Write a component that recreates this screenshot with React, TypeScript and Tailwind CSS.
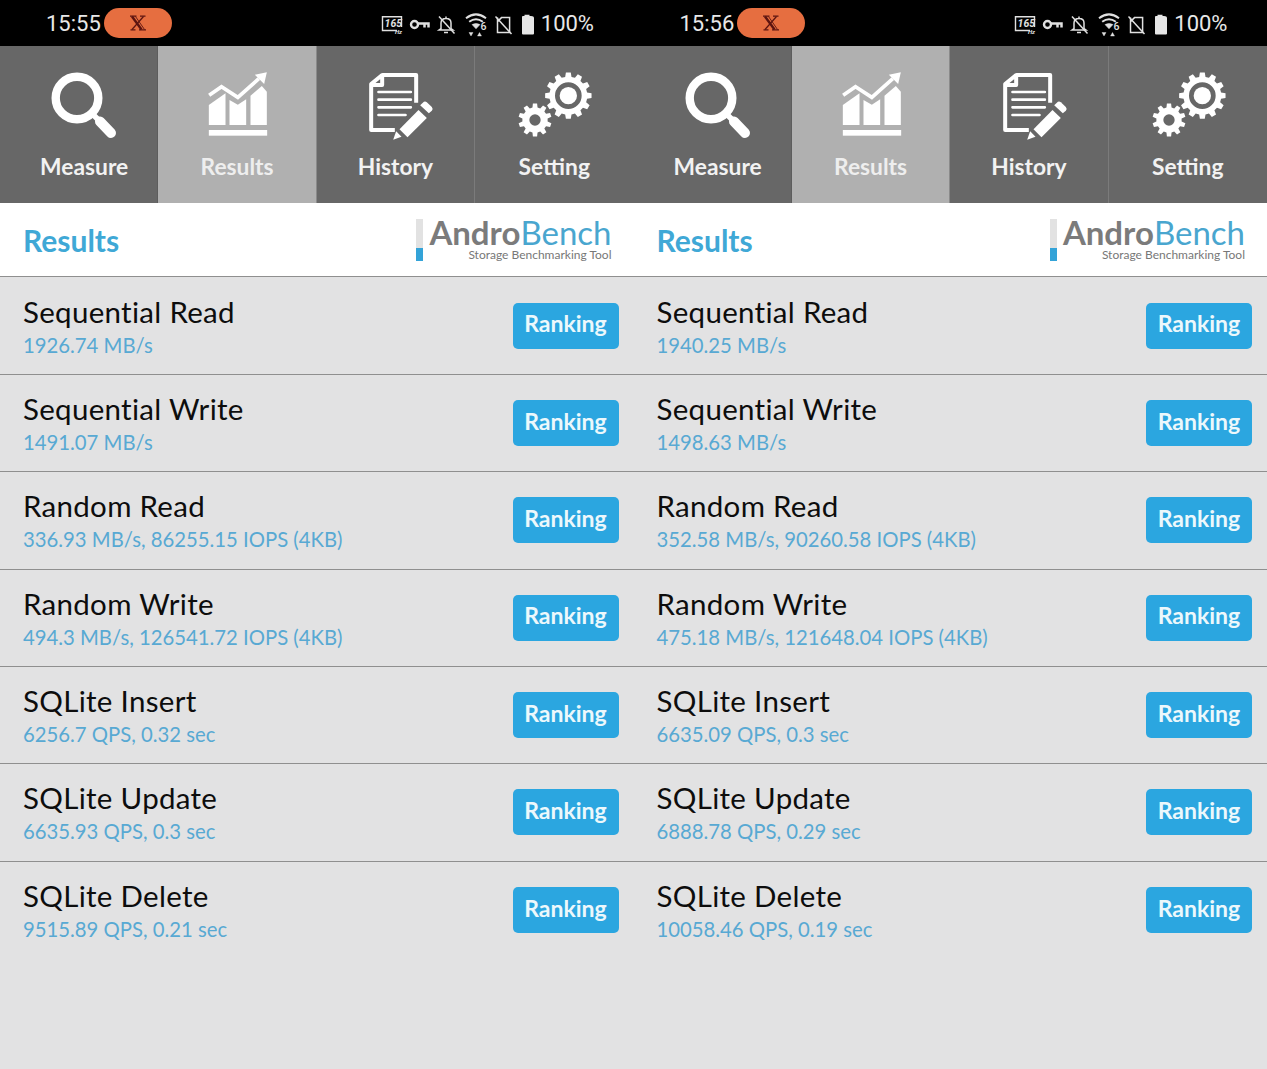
import React from "react";

const gearPath = (cx: number, cy: number, ro: number, ri: number, n: number) => {
  const pts: string[] = [];
  const step = (Math.PI * 2) / n;
  for (let i = 0; i < n; i++) {
    const a = i * step - Math.PI / 2;
    const p = (r: number, t: number) =>
      `${(cx + r * Math.cos(a + t * step)).toFixed(1)} ${(cy + r * Math.sin(a + t * step)).toFixed(1)}`;
    pts.push(p(ri, -0.32), p(ro, -0.2), p(ro, 0.2), p(ri, 0.32));
  }
  return "M" + pts.join("L") + "Z";
};

const circlePath = (cx: number, cy: number, r: number) =>
  `M${cx - r} ${cy}a${r} ${r} 0 1 0 ${2 * r} 0a${r} ${r} 0 1 0 ${-2 * r} 0Z`;

const MeasureIcon = () => (
  <svg width="90" height="90" viewBox="39.5 60 90 90" fill="none" stroke="white" strokeLinecap="round">
    <circle cx="77.5" cy="98" r="21.3" strokeWidth="8.4" />
    <path d="M93 114 L99 120" strokeWidth="5.5" />
    <path d="M100.5 121.5 L111.5 133" strokeWidth="10" />
  </svg>
);

const ResultsIcon = () => (
  <svg width="90" height="90" viewBox="7.5 0 270 270" fill="white">
    <path d="M58 135 L108 100 V195 H58Z" />
    <path d="M120 120 L145 134 L170 118 V195 H120Z" />
    <path d="M183 107 L217 78 L232 95 V195 H183Z" />
    <rect x="58" y="210" width="175" height="17" />
    <path d="M59 106 L96 80 L145 112 L208 56" fill="none" stroke="white" strokeWidth="11" />
    <path d="M232 37 L196 44 L224 72Z" />
  </svg>
);

const HistoryIcon = () => (
  <svg width="90" height="90" viewBox="1.5 0 270 270" fill="none">
    <path
      d="M98 45 H200 V128 M136 210 H65 V72 L98 45 V75 H65"
      stroke="white"
      strokeWidth="12"
      strokeLinejoin="round"
    />
    <path d="M87 96 H184 M87 119 H184 M87 142 H184 M87 165 H168" stroke="white" strokeWidth="8" strokeLinecap="round" />
    <path d="M150 208 L207 150 L232 174 L174 232Z" fill="white" stroke="#676767" strokeWidth="7" paintOrder="stroke" />
    <path d="M220 128 Q226 122 232 127 L247 141 Q252 147 247 152 L238 160 L212 136Z" fill="white" />
    <path d="M131 239 L140 214 L156 230Z" fill="white" />
  </svg>
);

const SettingIcon = () => (
  <svg width="90" height="90" viewBox="-3 0 270 270">
    <path
      fillRule="evenodd"
      fill="white"
      d={gearPath(175, 107, 70, 57, 12) + circlePath(175, 107, 40)}
    />
    <circle cx="175" cy="107" r="26" fill="white" />
    <path
      fillRule="evenodd"
      fill="white"
      d={gearPath(75, 180, 50, 38, 10) + circlePath(75, 180, 17)}
    />
  </svg>
);

const XLogo = () => (
  <svg width="18" height="16" viewBox="0 0 18 16" fill="none" stroke="#5c1410">
    <path d="M1 1.2 H7.5 M11 1.2 H16.5 M1.5 14.8 H6.5 M10 14.8 H17" strokeWidth="1.3" />
    <path d="M3 1.5 L12.5 14.5" strokeWidth="2.4" />
    <path d="M6.5 1.5 L15.5 14.5" strokeWidth="0.9" />
    <path d="M14.5 1.5 L3 14.5" strokeWidth="1.2" />
  </svg>
);

const StatusIcons = () => (
  <svg className="mt-[5px]" width="156" height="26" viewBox="0 0 156 26" fill="none" stroke="#e0e0e0">
    {/* 165 Hz */}
    <path d="M16 17.5 H1.5 V3.7 H20.5 V14" strokeWidth="1.4" />
    <text x="3.6" y="14" fill="#e0e0e0" stroke="none" fontSize="10.5" fontStyle="italic" fontWeight="700" fontFamily="Roboto, sans-serif">
      165
    </text>
    <text x="14" y="21" fill="#e0e0e0" stroke="none" fontSize="6" fontStyle="italic" fontWeight="700" fontFamily="Roboto, sans-serif">
      Hz
    </text>
    {/* key */}
    <circle cx="33.5" cy="11.5" r="3.5" strokeWidth="2.4" />
    <path d="M37 10.4 H47.5 V14.5 M43.5 11 V14.5" strokeWidth="2.5" />
    {/* bell off */}
    <path d="M65 3.5 V5 M60 15.5 V10 Q60 5.5 65 5.5 Q70 5.5 70 10 V15.5 L72 17 H58 L60 15.5 Z M63 19.5 H67" strokeWidth="1.5" />
    <path d="M58 3.5 L73.5 20.5" strokeWidth="1.5" />
    {/* wifi 6 */}
    <path d="M85 5.2 Q95 -2.4 105 5.2 M88.2 8.8 Q95 3.6 101.8 8.8" strokeWidth="2" />
    <path d="M91 11.6 Q95 9.2 99 11.6 L95 15.8Z" fill="#e0e0e0" strokeWidth="0.5" />
    <text x="99.5" y="16.6" fill="#e0e0e0" stroke="none" fontSize="10.5" fontWeight="500" fontFamily="Roboto, sans-serif">
      6
    </text>
    <path d="M88 19.5 H92 L90 23Z M96.5 23 H100.5 L98.5 19.5Z" fill="#e0e0e0" strokeWidth="0.4" />
    {/* no sim */}
    <path d="M116.5 4.6 V19.6 H128.6 V4.6 H120.5 L116.5 8.6" strokeWidth="1.5" />
    <path d="M114.5 3.5 L130.5 21" strokeWidth="1.5" />
    {/* battery */}
    <path
      d="M141 3.8 Q141 3 142 3 H143.5 V1.8 H148.5 V3 H150 Q153 3 153 5 V20.5 Q153 21.5 152 21.5 H142 Q141 21.5 141 20.5Z"
      fill="#e6e6e6"
      stroke="none"
    />
  </svg>
);

const tabs = [
  { label: "Measure", icon: <MeasureIcon />, cls: "bg-[#676767] text-[#f2f2f2] pl-[11px] border-r border-[#5d5d5d]" },
  { label: "Results", icon: <ResultsIcon />, cls: "bg-[#b0b0b0] text-[#eeeeee] border-r border-[#8a8a8a]" },
  { label: "History", icon: <HistoryIcon />, cls: "bg-[#676767] text-[#f2f2f2] border-r border-[#7b7b7b]" },
  { label: "Setting", icon: <SettingIcon />, cls: "bg-[#676767] text-[#f2f2f2]" },
];

const Row = ({ title, value }: { title: string; value: string }) => (
  <div className="flex h-[97.35px] items-center justify-between border-b border-[#8f8f8f] pl-[23px] pr-[15px] last:border-b-0">
    <div className="flex flex-col">
      <div className="text-[29.5px] leading-[36px] tracking-[0.3px] text-[#0d0d0d]">{title}</div>
      <div className="mt-[2px] text-[20.3px] leading-[26px] text-[#58a9d3]">{value}</div>
    </div>
    <button className="flex h-[46px] w-[106px] items-center justify-center rounded-[5px] bg-[#2ba6e0] pb-[4px] text-[23px] font-bold text-[#ecf8fc]">
      Ranking
    </button>
  </div>
);

const Screen = ({ time, rows }: { time: string; rows: [string, string][] }) => (
  <div className="flex flex-col">
    <div className="flex h-[46px] items-center bg-black pl-[46px] pr-[39.5px] font-['Roboto',sans-serif]">
      <span className="mt-[2px] text-[22px] leading-none text-[#e8e8e8]">{time}</span>
      <span className="ml-[3px] flex h-[30px] w-[68px] items-center justify-center rounded-full bg-[#e66e40]">
        <XLogo />
      </span>
      <div className="ml-auto flex items-center gap-[4px]">
        <StatusIcons />
        <span className="mt-[2px] text-[22px] leading-none text-[#e8e8e8]">100%</span>
      </div>
    </div>
    <div className="grid h-[158px] grid-cols-4 border-b border-white">
      {tabs.map((t) => (
        <div key={t.label} className={`flex flex-col items-center pt-[14px] ${t.cls}`}>
          {t.icon}
          <div className="mt-[1px] text-[22.8px] font-bold leading-[30px]">{t.label}</div>
        </div>
      ))}
    </div>
    <div className="flex h-[73px] items-center justify-between border-b border-[#8f8f8f] bg-white pl-[23px] pr-[22px]">
      <div className="pb-[1px] text-[30px] font-bold leading-none text-[#3fa8d6]">Results</div>
      <div className="flex h-[42px] items-stretch gap-[6px]">
        <div className="flex w-[7px] flex-col">
          <div className="flex-1 bg-[#e2e2e2]" />
          <div className="h-[13px] bg-[#33a3d8]" />
        </div>
        <div className="flex flex-col items-end">
          <div className="-mt-[3px] flex text-[33px] leading-[32px]">
            <span className="font-bold text-[#7b7b7b]">Andro</span>
            <span className="text-[#49a6cf]">Bench</span>
          </div>
          <div className="text-[12px] leading-[14px] text-[#777777]">Storage Benchmarking Tool</div>
        </div>
      </div>
    </div>
    <div className="flex flex-col pt-[0.5px]">
      {rows.map(([t, v]) => (
        <Row key={t} title={t} value={v} />
      ))}
    </div>
  </div>
);

const left: [string, string][] = [
  ["Sequential Read", "1926.74 MB/s"],
  ["Sequential Write", "1491.07 MB/s"],
  ["Random Read", "336.93 MB/s, 86255.15 IOPS (4KB)"],
  ["Random Write", "494.3 MB/s, 126541.72 IOPS (4KB)"],
  ["SQLite Insert", "6256.7 QPS, 0.32 sec"],
  ["SQLite Update", "6635.93 QPS, 0.3 sec"],
  ["SQLite Delete", "9515.89 QPS, 0.21 sec"],
];

const right: [string, string][] = [
  ["Sequential Read", "1940.25 MB/s"],
  ["Sequential Write", "1498.63 MB/s"],
  ["Random Read", "352.58 MB/s, 90260.58 IOPS (4KB)"],
  ["Random Write", "475.18 MB/s, 121648.04 IOPS (4KB)"],
  ["SQLite Insert", "6635.09 QPS, 0.3 sec"],
  ["SQLite Update", "6888.78 QPS, 0.29 sec"],
  ["SQLite Delete", "10058.46 QPS, 0.19 sec"],
];

export default function App() {
  return (
    <div className="grid h-[1069px] w-[1267px] grid-cols-2 overflow-hidden bg-[#e2e2e3] font-['Lato',sans-serif]">
      <Screen time="15:55" rows={left} />
      <Screen time="15:56" rows={right} />
    </div>
  );
}
